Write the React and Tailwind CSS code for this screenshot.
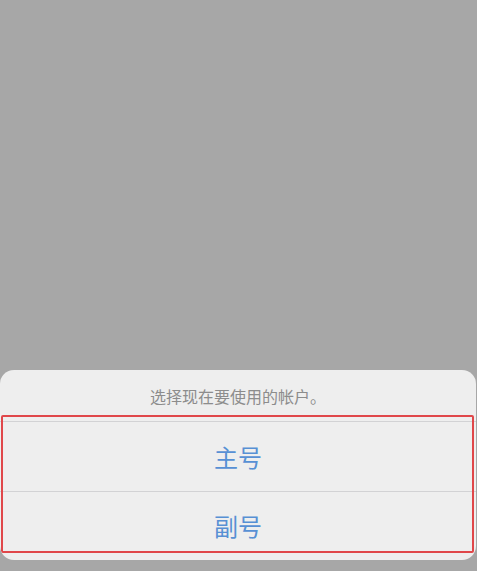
import React from 'react';

const cjk = { fontFamily: '"Noto Sans CJK SC", "Noto Sans", sans-serif' };

function SheetButton({ label, last }) {
  return (
    <button
      className={
        'flex w-full items-center justify-center text-[24px] text-[#5790d4] ' +
        (last ? 'h-[68px]' : 'h-[70px] border-b border-[#d2d2d4]')
      }
      style={cjk}
    >
      {label}
    </button>
  );
}

export default function App() {
  return (
    <div className="flex h-[571px] w-[477px] flex-col justify-end bg-[#a7a7a7] pb-[11px]" style={cjk}>
      <div className="mr-[1px] overflow-hidden rounded-[14px] bg-[#eeeeee]">
        <div className="flex h-[52px] items-center justify-center border-b border-[#d2d2d4] text-[16px] text-[#8c8c8c]">
          选择现在要使用的帐户。
        </div>
        <div className="relative">
          <SheetButton label="主号" />
          <SheetButton label="副号" last />
          {/* annotation box drawn over the options */}
          <div className="pointer-events-none absolute top-[-7px] right-[2px] bottom-[7px] left-[1px] rounded-[2px] border-[2.5px] border-[#e0474a]" />
        </div>
      </div>
    </div>
  );
}
